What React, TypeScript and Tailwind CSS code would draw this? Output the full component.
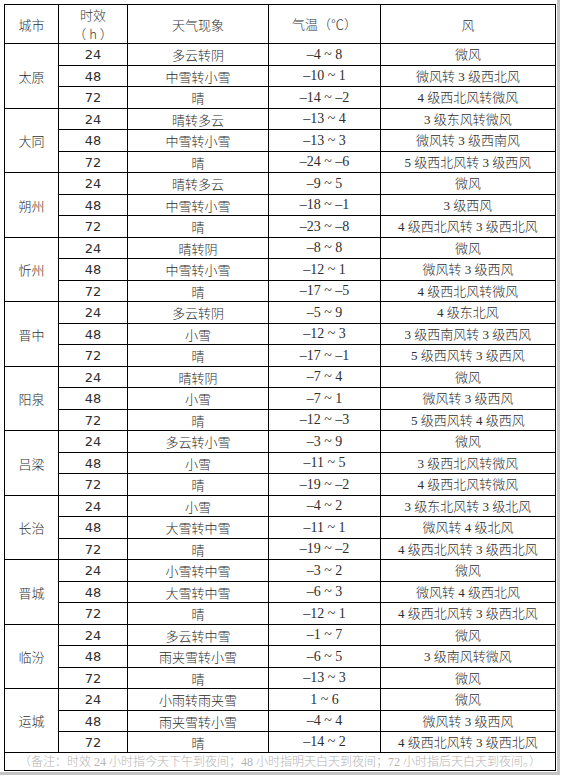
import React from "react";

type Row = [string, string, string, string];
type City = { name: string; rows: Row[] };

const data: City[] = [
  { name: "太原", rows: [["24", "多云转阴", "–4 ~ 8", "微风"], ["48", "中雪转小雪", "–10 ~ 1", "微风转 3 级西北风"], ["72", "晴", "–14 ~ –2", "4 级西北风转微风"]] },
  { name: "大同", rows: [["24", "晴转多云", "–13 ~ 4", "3 级东风转微风"], ["48", "中雪转小雪", "–13 ~ 3", "微风转 3 级西南风"], ["72", "晴", "–24 ~ –6", "5 级西北风转 3 级西风"]] },
  { name: "朔州", rows: [["24", "晴转多云", "–9 ~ 5", "微风"], ["48", "中雪转小雪", "–18 ~ –1", "3 级西风"], ["72", "晴", "–23 ~ –8", "4 级西北风转 3 级西北风"]] },
  { name: "忻州", rows: [["24", "晴转阴", "–8 ~ 8", "微风"], ["48", "中雪转小雪", "–12 ~ 1", "微风转 3 级西风"], ["72", "晴", "–17 ~ –5", "4 级西北风转微风"]] },
  { name: "晋中", rows: [["24", "多云转阴", "–5 ~ 9", "4 级东北风"], ["48", "小雪", "–12 ~ 3", "3 级西南风转 3 级西风"], ["72", "晴", "–17 ~ –1", "5 级西风转 3 级西风"]] },
  { name: "阳泉", rows: [["24", "晴转阴", "–7 ~ 4", "微风"], ["48", "小雪", "–7 ~ 1", "微风转 3 级西风"], ["72", "晴", "–12 ~ –3", "5 级西风转 4 级西风"]] },
  { name: "吕梁", rows: [["24", "多云转小雪", "–3 ~ 9", "微风"], ["48", "小雪", "–11 ~ 5", "3 级西北风转微风"], ["72", "晴", "–19 ~ –2", "4 级西北风转微风"]] },
  { name: "长治", rows: [["24", "小雪", "–4 ~ 2", "3 级东北风转 3 级北风"], ["48", "大雪转中雪", "–11 ~ 1", "微风转 4 级北风"], ["72", "晴", "–19 ~ –2", "4 级西北风转 3 级西北风"]] },
  { name: "晋城", rows: [["24", "小雪转中雪", "–3 ~ 2", "微风"], ["48", "大雪转中雪", "–6 ~ 3", "微风转 4 级西北风"], ["72", "晴", "–12 ~ 1", "4 级西北风转 3 级西北风"]] },
  { name: "临汾", rows: [["24", "多云转中雪", "–1 ~ 7", "微风"], ["48", "雨夹雪转小雪", "–6 ~ 5", "3 级南风转微风"], ["72", "晴", "–13 ~ 3", "微风"]] },
  { name: "运城", rows: [["24", "小雨转雨夹雪", "1 ~ 6", "微风"], ["48", "雨夹雪转小雪", "–4 ~ 4", "微风转 3 级西风"], ["72", "晴", "–14 ~ 2", "4 级西北风转 3 级西北风"]] },
];

const cell = "bg-white flex items-center justify-center leading-none text-[#2e2e2e] whitespace-nowrap";
const cjk = "font-['Noto_Sans_CJK_SC',sans-serif] text-[13px] font-light";
const num = "font-['DejaVu_Sans',sans-serif] text-[13px]";
const serif = "font-['Liberation_Serif','Noto_Sans_CJK_SC',serif] text-[14px]";
const wind = "font-['Liberation_Serif','Noto_Sans_CJK_SC',serif] text-[13px] font-light";

export default function App() {
  return (
    <div className="w-[560px] h-[775px] bg-white border-r-[3px] border-b-[3px] border-[#c4c4c4]">
      <div className="ml-[4px] pt-[4px]">
        <div className="grid w-fit bg-black p-px gap-px grid-cols-[53px_68px_140px_111px_174px] grid-rows-[38px_repeat(16,21px_20px)_20px_17px]">
          <div className={`${cell} ${cjk} text-[#333]`}>城市</div>
          <div className={`${cell} ${cjk} text-[#333] flex-col`}>
            <span className="block leading-[19px]">时效</span>
            <span className="block leading-[19px]">（ h ）</span>
          </div>
          <div className={`${cell} ${cjk} text-[#333]`}>天气现象</div>
          <div className={`${cell} font-['Liberation_Serif','Noto_Sans_CJK_SC',serif] text-[13px] font-light text-[#333]`}>气温（℃）</div>
          <div className={`${cell} ${cjk} text-[#333]`}>风</div>
          {data.map((c) => (
            <React.Fragment key={c.name}>
              <div className={`${cell} ${cjk} row-span-3`}>{c.name}</div>
              {c.rows.map((r) => (
                <React.Fragment key={c.name + r[0]}>
                  <div className={`${cell} ${num}`}>{r[0]}</div>
                  <div className={`${cell} ${cjk}`}>{r[1]}</div>
                  <div className={`${cell} ${serif}`}>{r[2]}</div>
                  <div className={`${cell} ${wind}`}>{r[3]}</div>
                </React.Fragment>
              ))}
            </React.Fragment>
          ))}
          <div className={`${cell} col-span-5 font-['Liberation_Serif','Noto_Sans_CJK_SC',serif] text-[12px] font-light text-[#b4b4b4]`}>
            （备注：时效 24 小时指今天下午到夜间；48 小时指明天白天到夜间；72 小时指后天白天到夜间。）
          </div>
        </div>
      </div>
    </div>
  );
}
